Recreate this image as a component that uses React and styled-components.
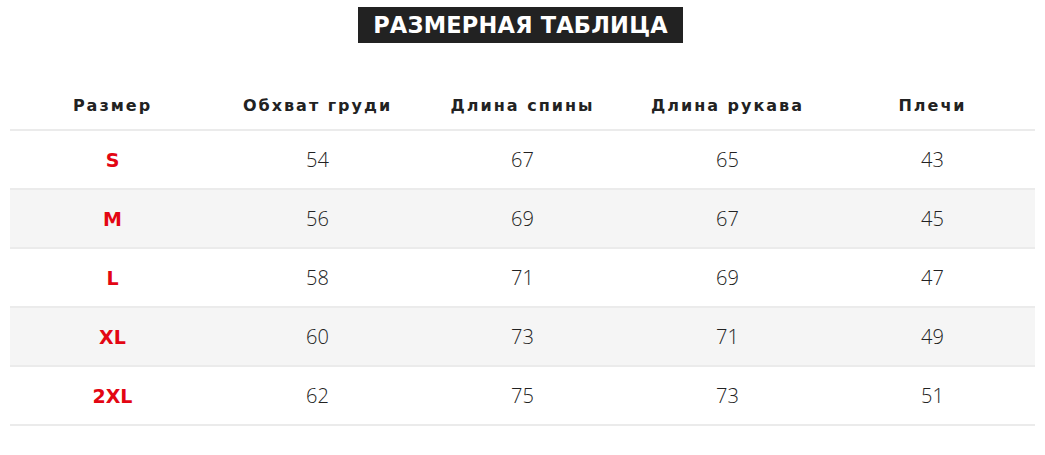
import React from "react";
import styled, { createGlobalStyle } from "styled-components";

const Global = createGlobalStyle`
  html, body { margin: 0; padding: 0; background: #fff; }
  body { font-family: "Open Sans", "DejaVu Sans", sans-serif; }
`;

const Page = styled.div`
  padding: 7px 10px 0 10px;
  display: flex;
  flex-direction: column;
  align-items: center;
`;

const Title = styled.h2`
  margin: 0 0 0 -4px;
  background: #222222;
  color: #fff;
  font-family: "DejaVu Sans", sans-serif;
  font-weight: 700;
  font-size: 22.5px;
  line-height: 36px;
  height: 36px;
  padding: 0 15px;
  letter-spacing: 0.2px;
`;

const Table = styled.table`
  margin-top: 37px;
  width: 1025px;
  border-collapse: collapse;
  table-layout: fixed;
`;

const Th = styled.th`
  height: 48px;
  padding: 1px 0 0 0;
  font-family: "DejaVu Sans", sans-serif;
  font-weight: 700;
  font-size: 16px;
  letter-spacing: 2px;
  color: #222;
  text-align: center;
  vertical-align: middle;
  border-bottom: 2px solid #ebebeb;
`;

const Tr = styled.tr`
  background: ${(p) => (p.$striped ? "#f5f5f5" : "#fff")};
  border-bottom: 2px solid #ebebeb;
`;

const Td = styled.td`
  height: 57px;
  padding: 0;
  text-align: center;
  vertical-align: middle;
  font-family: "Open Sans", sans-serif;
  font-weight: 300;
  font-size: 20px;
  color: #222;
`;

const SizeTd = styled(Td)`
  font-family: "DejaVu Sans", sans-serif;
  font-weight: 700;
  font-size: 19px;
  color: #e30613;
`;

const headers = ["Размер", "Обхват груди", "Длина спины", "Длина рукава", "Плечи"];
const rows = [
  ["S", 54, 67, 65, 43],
  ["M", 56, 69, 67, 45],
  ["L", 58, 71, 69, 47],
  ["XL", 60, 73, 71, 49],
  ["2XL", 62, 75, 73, 51],
];

export default function App() {
  return (
    <>
      <Global />
      <Page>
        <Title>РАЗМЕРНАЯ ТАБЛИЦА</Title>
        <Table>
          <thead>
            <tr>
              {headers.map((h) => (
                <Th key={h}>{h}</Th>
              ))}
            </tr>
          </thead>
          <tbody>
            {rows.map((r, i) => (
              <Tr key={r[0]} $striped={i % 2 === 1}>
                <SizeTd>{r[0]}</SizeTd>
                {r.slice(1).map((v, j) => (
                  <Td key={j}>{v}</Td>
                ))}
              </Tr>
            ))}
          </tbody>
        </Table>
      </Page>
    </>
  );
}
